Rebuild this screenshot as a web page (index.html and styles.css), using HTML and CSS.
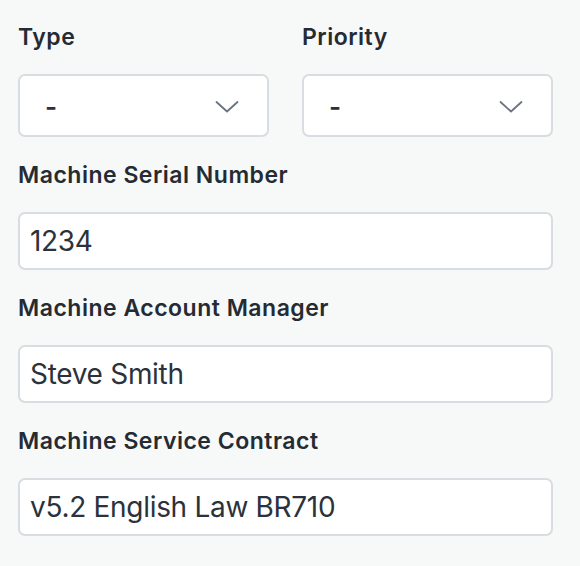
FILE: index.html
```html
<!DOCTYPE html>
<html>
<head>
<meta charset="utf-8">
<link rel="stylesheet" href="styles.css">
</head>
<body>
<form class="form">
  <div class="row">
    <div class="field">
      <label class="label">Type</label>
      <div class="select">
        <span class="select-value">-</span>
        <svg class="chevron" width="24" height="12" viewBox="0 0 24 12"><path d="M1.5 1 L12 10.5 L22.5 1" fill="none" stroke="#6b7280" stroke-width="1.8" stroke-linecap="round" stroke-linejoin="round"/></svg>
      </div>
    </div>
    <div class="field">
      <label class="label">Priority</label>
      <div class="select">
        <span class="select-value">-</span>
        <svg class="chevron" width="24" height="12" viewBox="0 0 24 12"><path d="M1.5 1 L12 10.5 L22.5 1" fill="none" stroke="#6b7280" stroke-width="1.8" stroke-linecap="round" stroke-linejoin="round"/></svg>
      </div>
    </div>
  </div>
  <div class="field">
    <label class="label">Machine Serial Number</label>
    <div class="input">1234</div>
  </div>
  <div class="field">
    <label class="label">Machine Account Manager</label>
    <div class="input">Steve Smith</div>
  </div>
  <div class="field">
    <label class="label">Machine Service Contract</label>
    <div class="input">v5.2 English Law BR710</div>
  </div>
</form>
</body>
</html>
```
FILE: styles.css
```css
html, body {
  margin: 0;
  padding: 0;
  background: #f7f8f8;
}
body {
  font-family: Inter, "Liberation Sans", sans-serif;
  color: #2b323b;
}
.form {
  display: flex;
  flex-direction: column;
  gap: 22px;
  padding: 21px 27px 0 18px;
}
.row {
  display: grid;
  grid-template-columns: 1fr 1fr;
  gap: 33px;
}
.field {
  display: flex;
  flex-direction: column;
}
.label {
  font-size: 23px;
  font-weight: 600;
  letter-spacing: 0.5px;
  line-height: 32px;
  margin-bottom: 21px;
  color: #252b32;
}
.select, .input {
  box-sizing: border-box;
  background: #fff;
  border: 2px solid #d9dce0;
  border-radius: 7px;
  display: flex;
  align-items: center;
}
.select {
  height: 63px;
  padding: 2px 28px 0 25px;
  justify-content: space-between;
}
.select-value {
  font-size: 26px;
  font-weight: 600;
}
.input {
  height: 58px;
  padding: 0 10px;
  font-size: 28px;
  letter-spacing: -0.3px;
  color: #2b323b;
}
```
